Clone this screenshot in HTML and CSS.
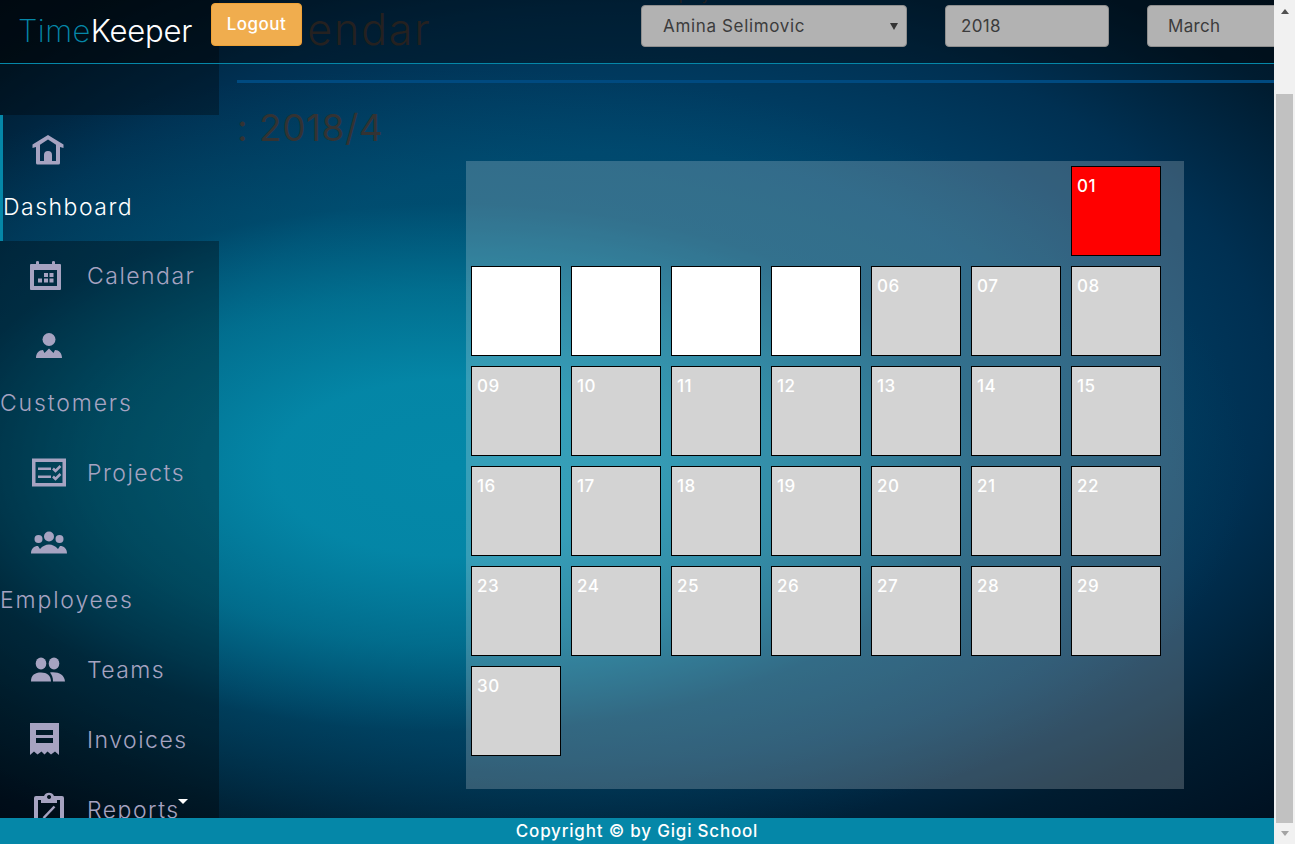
FILE: index.html
```html
<!DOCTYPE html>
<html lang="en">
<head>
<meta charset="utf-8">
<title>TimeKeeper</title>
<link rel="stylesheet" href="styles.css">
</head>
<body>
<div class="viewport">
  <div class="app">
    <header class="topbar"><div class="brand"><span>Time</span>Keeper</div></header>
    <div class="controls">
      <button class="logout">Logout</button>
      <div class="field person">Amina Selimovic<i class="arrow"></i></div>
      <div class="field year">2018</div>
      <div class="field month">March</div>
    </div>
    <div class="body">
      <nav class="sidebar">
        <div class="side-top"></div>
        <a class="item wrap active"><span class="ico"><svg width="40" height="40" viewBox="0 0 40 40"><path d="M20 5 35.500 14.500V18L32 17V33q0 1.500-1.500 1.500h-21Q8 34.500 8 33V17L4.500 18V14.500ZM20 9.500 12 14.700V31H16V25a4 4 0 0 1 8 0v6h4V14.700Z" fill-rule="evenodd"/></svg></span><span class="t w1">Dashboard</span></a>
        <a class="item cal"><span class="ico"><svg width="40" height="40" viewBox="0 0 40 40"><path fill-rule="evenodd" d="M5 9q0-1 1-1h5V6q0-1 1.500-1T14 6v2h13V6q0-1 1.500-1T30 6v2h5q1 0 1 1v24q0 1-1 1H6q-1 0-1-1ZM9 14v16h23V14Z"/><path d="M19 17h4v4h-4zM24.500 17h4v4h-4zM13 22.500h4v4h-4zM19 22.500h4v4h-4zM24.500 22.500h4v4h-4z"/></svg></span><span class="t w2">Calendar</span></a>
        <a class="item wrap"><span class="ico"><svg width="40" height="40" viewBox="0 0 40 40"><circle cx="20" cy="13.500" r="6.500"/><path d="M7 32c0-5 3-8 7-8l1.500 3L20 22.500 24.500 27l1.500-3c4 0 7 3 7 8Z"/></svg></span><span class="t w3">Customers</span></a>
        <a class="item"><span class="ico"><svg width="40" height="40" viewBox="0 0 40 40"><path fill-rule="evenodd" d="M3 5.500h34v28H3ZM6.500 9v21h27V9Z"/><path d="M9 14.500h13v2.500H9zM9 22.500h13v2.500H9z"/><path d="m24 15.500 2.500 2.500 5-5M24 23.500l2.500 2.500 5-5" class="line"/></svg></span><span class="t w4">Projects</span></a>
        <a class="item wrap"><span class="ico"><svg width="40" height="40" viewBox="0 0 40 40"><circle cx="20" cy="13.500" r="5"/><circle cx="9.500" cy="16" r="4"/><circle cx="30.500" cy="16" r="4"/><path d="M2 30.500c0-5 3-7.500 7-7.500l2 3c5-6 13-6 18 0l2-3c4 0 7 2.500 7 7.500Z"/></svg></span><span class="t w5">Employees</span></a>
        <a class="item"><span class="ico"><svg width="40" height="40" viewBox="0 0 40 40"><ellipse cx="12" cy="13.500" rx="5.300" ry="6"/><ellipse cx="25" cy="13.500" rx="5.300" ry="6"/><path d="M2 31.500C2 25 6 22.500 12 22.500s10 3 10 9ZM21 22.500c8-1 14.500 2 15 9H24c0-4-1-6.500-3-9Z"/></svg></span><span class="t w6">Teams</span></a>
        <a class="item"><span class="ico"><svg width="40" height="40" viewBox="0 0 40 40"><path fill-rule="evenodd" d="M1 3h29v32l-4-3.500-4 3-3.500-3-3 3-3-3-4 3-3.500-3-4 3.500ZM7 10v5h17v-5ZM7 18v5h17v-5Z"/></svg></span><span class="t w7">Invoices</span></a>
        <a class="item"><span class="ico"><svg width="40" height="40" viewBox="0 0 40 40"><path fill-rule="evenodd" d="M5 8q0-2 2-2h8a5.500 5.500 0 0 1 10 0h8q2 0 2 2v29H5ZM9 10v23h22V10h-3v3H12v-3ZM20 5a2 2 0 1 0 .1 0Z"/><path d="m14.500 28 11-11.500" stroke-width="3.500" class="line"/></svg></span><span class="t w8">Reports</span><i class="caret"></i></a>
      </nav>
      <main class="content">
        <div class="heading"><h1>Calendar</h1><span class="label">Employee</span></div>
        <div class="rule"></div>
        <h2>: 2018/4</h2>
        <div class="month-grid">
          <div class="day first off">01</div>
          <div class="day blank"></div><div class="day blank"></div><div class="day blank"></div><div class="day blank"></div>
          <div class="day">06</div><div class="day">07</div><div class="day">08</div>
          <div class="day">09</div><div class="day">10</div><div class="day">11</div><div class="day">12</div><div class="day">13</div><div class="day">14</div><div class="day">15</div>
          <div class="day">16</div><div class="day">17</div><div class="day">18</div><div class="day">19</div><div class="day">20</div><div class="day">21</div><div class="day">22</div>
          <div class="day">23</div><div class="day">24</div><div class="day">25</div><div class="day">26</div><div class="day">27</div><div class="day">28</div><div class="day">29</div>
          <div class="day">30</div>
        </div>
      </main>
    </div>
    <footer class="footer">Copyright © by Gigi School</footer>
  </div>
  <div class="scrollbar"><i class="up"></i><div class="thumb"></div><i class="down"></i></div>
</div>
</body>
</html>
```
FILE: styles.css
```css
* { box-sizing: border-box; }
body { margin: 0; overflow: hidden; font-family: Inter, "Open Sans", sans-serif; }
.viewport { display: flex; width: 1295px; height: 844px; }
.app {
  position: relative; display: flex; flex-direction: column; width: 1274px; height: 844px; overflow: hidden;
  background:
    radial-gradient(ellipse 800px 400px at 450px 468px, #0488a8 0%, rgba(4,136,168,.97) 22%, rgba(2,124,154,.76) 44%, rgba(0,92,118,.36) 66%, rgba(0,60,80,0) 100%),
    radial-gradient(ellipse 900px 520px at 620px 385px, #004a74 0%, #00446c 45%, #003052 72%, #001c30 92%, #001020 112%);
}
.topbar { position: absolute; z-index: 2; top: 0; left: 0; width: 100%; height: 64px; padding: 12px 0 0 18px; background: rgba(0,0,0,.36); border-bottom: 1px solid #0587a8; }
.brand { color: #fff; font-size: 31px; line-height: 38px; font-weight: 300; letter-spacing: -.2px; white-space: nowrap; }
.brand span { color: #0587a8; font-weight: 200; letter-spacing: .4px; }
.controls { position: absolute; z-index: 3; top: 3px; left: 211px; display: flex; align-items: flex-start; }
.logout { width: 91px; height: 43px; padding: 0 0 2px; border: 1px solid #eea236; border-radius: 4px; background: #f0ad4e; color: #fff; font: 500 17px/38px Inter, sans-serif; letter-spacing: .5px; }
.field { display: flex; align-items: center; height: 42px; margin-top: 2px; border: 1px solid #8e8e8e; border-radius: 4px; background: #b2b2b2; color: #3c3c3c; font-size: 17px; letter-spacing: .3px; white-space: nowrap; }
.person { width: 266px; margin-left: 339px; padding: 0 8px 0 21px; justify-content: space-between; letter-spacing: .65px; }
.year { width: 164px; margin-left: 38px; padding-left: 15px; }
.month { width: 190px; margin-left: 38px; padding-left: 20px; }
.arrow { border: 4px solid transparent; border-top: 7px solid #333; border-bottom: 0; }
.body { display: flex; height: 818px; overflow: hidden; }
.sidebar { flex: none; width: 219px; height: 818px; overflow: hidden; }
.side-top { height: 115px; background: rgba(0,0,0,.32); }
.item { display: flex; flex: none; align-items: center; height: 70px; background: rgba(0,0,0,.32); color: #a6a3c1; font-size: 23px; font-weight: 300; letter-spacing: 1.5px; }
.item .t { line-height: 70px; white-space: nowrap; }
.wrap { flex-wrap: wrap; align-content: flex-start; height: 127px; }
.wrap .ico { margin-right: 60px; }
.item.wrap .t { line-height: 44px; }
.item .w3, .item .w5 { letter-spacing: 1.85px; }
.item .w6 { letter-spacing: 1.4px; }
.active { height: 126px; border-left: 3px solid #0587a8; background: none; color: #fff; }
.active .ico { padding-left: 25px; }
.ico { display: flex; align-items: center; flex: none; width: 87px; height: 70px; padding-left: 29px; }
.ico svg { display: block; fill: #a6a3c1; }
.line { fill: none; stroke: #a6a3c1; stroke-width: 2.500; }
.caret { margin: -17px 0 0 -2px; border: 5px solid transparent; border-top-color: #fff; border-bottom: 0; }
.cal .ico { padding-left: 25px; }
.content { flex: 1; padding-left: 18px; }
.heading { display: flex; height: 80px; justify-content: space-between; }
h1 { margin: 0; color: #3a3432; font-size: 43px; line-height: 58px; font-weight: 350; letter-spacing: 1.8px; }
.label { width: 619px; margin-top: -16px; color: #3a3432; font-size: 16px; line-height: 20px; }
.rule { height: 3px; background: #004a80; }
h2 { margin: 0; height: 78px; padding-top: 20px; color: #333; font-size: 37px; line-height: 50px; font-weight: 375; letter-spacing: .5px; }
.month-grid { display: grid; grid-template-columns: repeat(7, 90px); grid-auto-rows: 90px; gap: 10px; align-content: start; width: 718px; height: 628px; margin-left: 229px; padding: 5px; background: rgba(255,255,255,.2); }
.day { padding: 8px 5px; border: 1px solid #000; background: #d3d3d3; color: #fff; font-size: 17px; line-height: 22px; font-weight: 500; letter-spacing: .500px; }
.first { grid-column: 7; }
.off { background: #f00; }
.blank { background: #fff; }
.footer { height: 26px; background: #0587a8; color: #fff; font-size: 17px; line-height: 26px; font-weight: 500; letter-spacing: .8px; text-align: center; }
.scrollbar { display: flex; flex-direction: column; align-items: center; width: 21px; height: 844px; padding: 9px 0 8px; background: #f1f1f1; }
.up { border: 4px solid transparent; border-bottom: 5px solid #505050; border-top: 0; }
.thumb { width: 17px; height: 729px; margin: 80px 0 auto; background: #c1c1c1; }
.down { border: 4px solid transparent; border-top: 5px solid #a3a3a3; border-bottom: 0; }
```
